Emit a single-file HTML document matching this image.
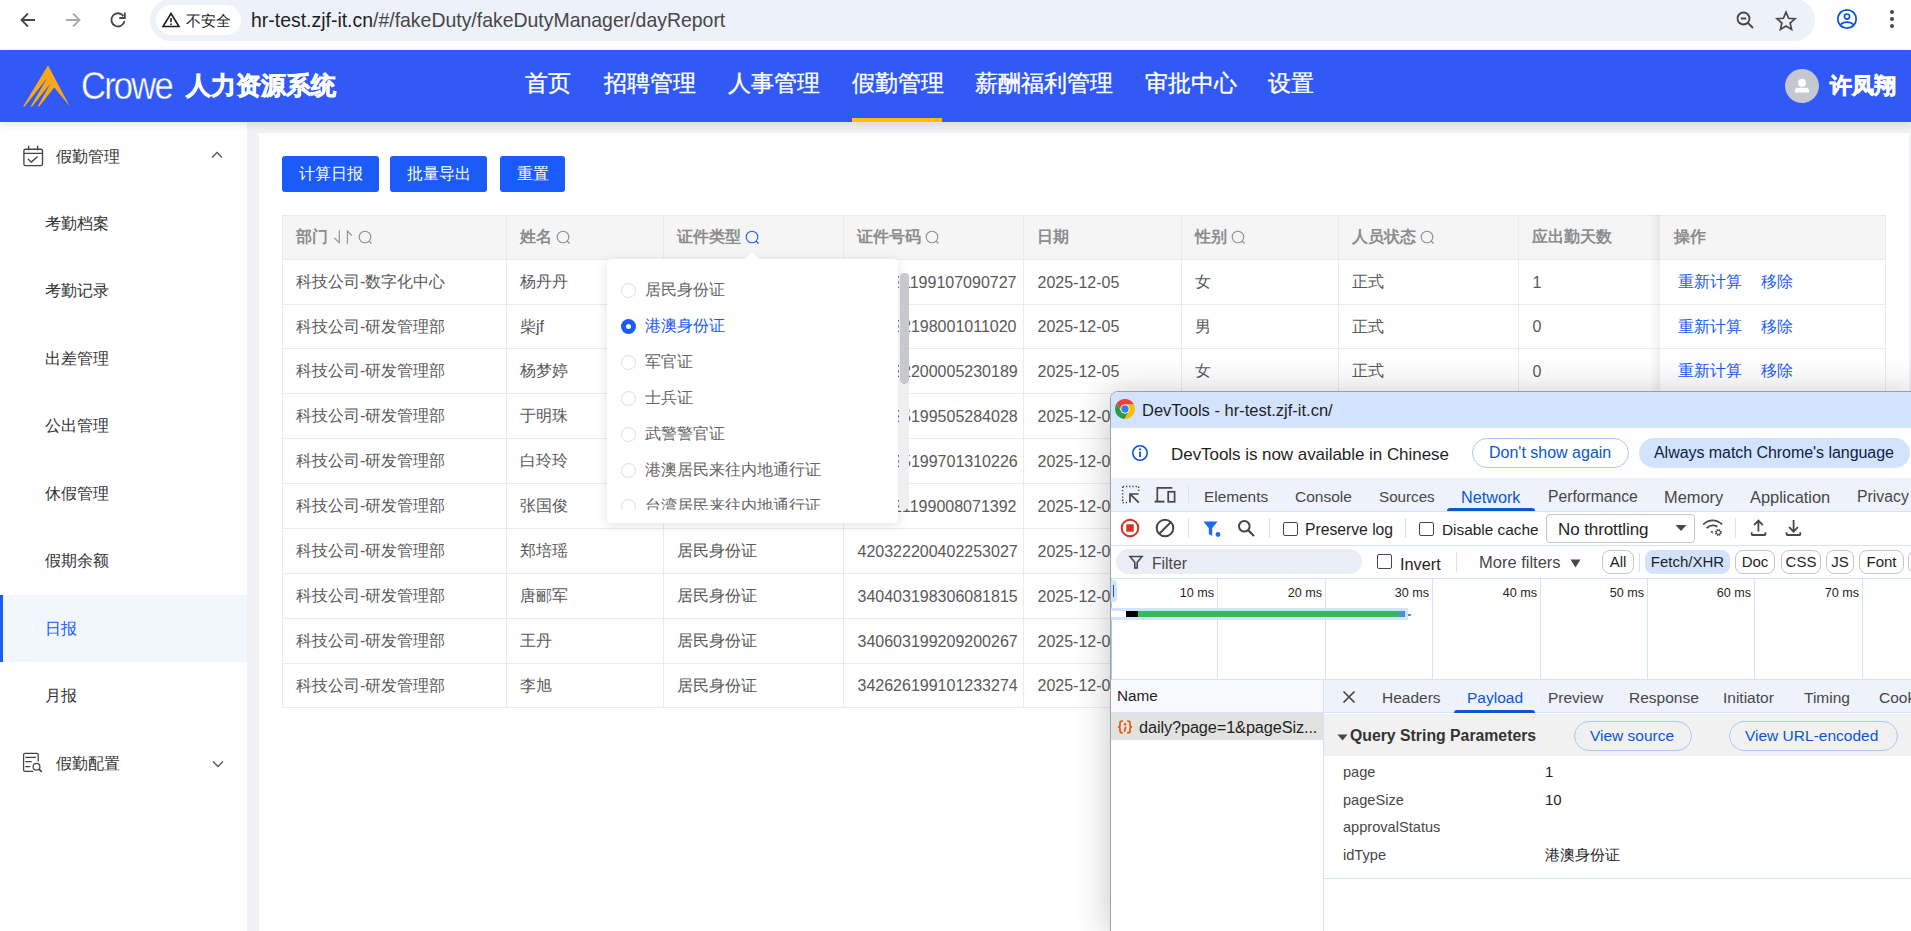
<!DOCTYPE html><html><head><meta charset="utf-8"><style>
*{box-sizing:border-box;margin:0;padding:0}
html,body{width:1911px;height:931px;overflow:hidden;background:#fff;font-family:"Liberation Sans",sans-serif;}
.a{position:absolute;white-space:nowrap}
svg{position:absolute;overflow:visible}
</style></head><body>
<div class="a" style="left:0px;top:0px;width:1911px;height:50px;background:#fff"></div>
<div class="a" style="left:150px;top:-1px;width:1665px;height:42px;background:#edf1f9;border-radius:21px"></div>
<div class="a" style="left:156px;top:5px;width:85px;height:30px;background:#fff;border-radius:15px"></div>
<svg style="left:18px;top:10px;" width="20" height="20" viewBox="0 0 20 20"><path d="M17 10H4M10 3.5L3.5 10 10 16.5" fill="none" stroke="#474747" stroke-width="1.8"/></svg>
<svg style="left:63px;top:10px;" width="20" height="20" viewBox="0 0 20 20"><path d="M3 10H16M10 3.5L16.5 10 10 16.5" fill="none" stroke="#a8a8a8" stroke-width="1.8"/></svg>
<svg style="left:108px;top:10px;" width="20" height="20" viewBox="0 0 20 20"><path d="M15.5 6.2A6.6 6.6 0 1 0 16.5 11" fill="none" stroke="#474747" stroke-width="1.8"/><path d="M16.8 2.5V8H11.3" fill="none" stroke="#474747" stroke-width="1.8"/></svg>
<svg style="left:162px;top:12px;" width="18" height="16" viewBox="0 0 18 16"><path d="M9 1.5L17 14.5H1Z" fill="none" stroke="#1f1f1f" stroke-width="1.6" stroke-linejoin="miter"/><path d="M9 6v4.2M9 11.5v1.6" stroke="#1f1f1f" stroke-width="1.6"/></svg>
<div class="a" style="left:186px;top:11px;font-size:15px;line-height:19px;color:#1f1f1f;">不安全</div>
<div class="a" style="left:251px;top:8.5px;font-size:19.45px;line-height:23.45px;color:#1f1f1f;">hr-test.zjf-it.cn<span style="color:#474747">/#/fakeDuty/fakeDutyManager/dayReport</span></div>
<svg style="left:1736px;top:11px;" width="20" height="20" viewBox="0 0 20 20"><circle cx="7.5" cy="7.5" r="6" fill="none" stroke="#474747" stroke-width="1.8"/><path d="M4.8 7.5H10.2M12 12L17 17" stroke="#474747" stroke-width="1.8"/></svg>
<svg style="left:1775px;top:10px;" width="22" height="22" viewBox="0 0 22 22"><path d="M11 2.2L13.6 8.3 20 8.8 15.1 13 16.6 19.4 11 16 5.4 19.4 6.9 13 2 8.8 8.4 8.3Z" fill="none" stroke="#474747" stroke-width="1.7" stroke-linejoin="miter"/></svg>
<svg style="left:1836px;top:8px;" width="22" height="22" viewBox="0 0 22 22"><circle cx="11" cy="11" r="9.2" fill="none" stroke="#0b57d0" stroke-width="1.8"/><circle cx="11" cy="8.6" r="2.6" fill="none" stroke="#0b57d0" stroke-width="1.7"/><path d="M5 16.6C7 13.4 15 13.4 17 16.6" fill="none" stroke="#0b57d0" stroke-width="1.7"/></svg>
<div class="a" style="left:1890px;top:10px;width:4px;height:4px;background:#474747;border-radius:2px"></div>
<div class="a" style="left:1890px;top:17px;width:4px;height:4px;background:#474747;border-radius:2px"></div>
<div class="a" style="left:1890px;top:24px;width:4px;height:4px;background:#474747;border-radius:2px"></div>
<div class="a" style="left:0px;top:122px;width:247px;height:809px;background:#fff"></div>
<div class="a" style="left:247px;top:122px;width:1664px;height:809px;background:#f0f1f4"></div>
<div class="a" style="left:259px;top:133px;width:1650px;height:798px;background:#fff"></div>
<div class="a" style="left:0px;top:50px;width:1911px;height:72px;background:#3059f5;box-shadow:0 3px 8px rgba(0,0,0,.10)"></div>
<svg style="left:18px;top:60px;" width="60" height="52" viewBox="0 0 60 52"><path d="M30 5.3L51.8 46.6 36.3 27.6 21.2 46.6 19.6 46.6 32.6 23.3 14.2 46.6 12.6 46.6 29.2 18 6.7 46.6 5.1 46.6Z" fill="#f5a81c"/></svg>
<div class="a" style="left:81px;top:64px;font-size:38px;line-height:44px;color:#fff;transform:scaleX(0.91);transform-origin:0 0;letter-spacing:-2px;-webkit-text-stroke:0.4px #3059f5">Crowe</div>
<div class="a" style="left:186px;top:71px;font-size:24.5px;line-height:30px;color:#fff;font-weight:bold;-webkit-text-stroke:0.7px #fff">人力资源系统</div>
<div class="a" style="left:525px;top:68px;font-size:23px;line-height:30px;color:#fff;-webkit-text-stroke:0.35px #fff">首页</div>
<div class="a" style="left:604px;top:68px;font-size:23px;line-height:30px;color:#fff;-webkit-text-stroke:0.35px #fff">招聘管理</div>
<div class="a" style="left:728px;top:68px;font-size:23px;line-height:30px;color:#fff;-webkit-text-stroke:0.35px #fff">人事管理</div>
<div class="a" style="left:852px;top:68px;font-size:23px;line-height:30px;color:#fff;-webkit-text-stroke:0.35px #fff">假勤管理</div>
<div class="a" style="left:975px;top:68px;font-size:23px;line-height:30px;color:#fff;-webkit-text-stroke:0.35px #fff">薪酬福利管理</div>
<div class="a" style="left:1145px;top:68px;font-size:23px;line-height:30px;color:#fff;-webkit-text-stroke:0.35px #fff">审批中心</div>
<div class="a" style="left:1268px;top:68px;font-size:23px;line-height:30px;color:#fff;-webkit-text-stroke:0.35px #fff">设置</div>
<div class="a" style="left:852px;top:118px;width:90px;height:4px;background:#ffbf00"></div>
<div class="a" style="left:1785px;top:69px;width:34px;height:34px;background:#c5c8d0;border-radius:50%"></div>
<svg style="left:1792px;top:75px;" width="20" height="20" viewBox="0 0 20 20"><circle cx="10" cy="7.8" r="4" fill="#fff"/><path d="M3 17.5V15.8C3 13.2 5 12.8 6.5 12.8H13.5C15 12.8 17 13.2 17 15.8V17.5Z" fill="#fff"/></svg>
<div class="a" style="left:1830px;top:70.7px;font-size:22.3px;line-height:30px;color:#fff;font-weight:bold;-webkit-text-stroke:0.7px #fff">许凤翔</div>
<svg style="left:15px;top:135px;" width="40" height="40" viewBox="0 0 40 40"><rect x="8.9" y="14.2" width="18.6" height="16.4" rx="1.6" fill="none" stroke="#444" stroke-width="1.35"/><path d="M13.6 10.8V15.2M22.6 10.8V15.2M8.9 18.4H27.5" stroke="#444" stroke-width="1.35"/><path d="M12.9 23.9L16.4 27 22.6 21.4" fill="none" stroke="#444" stroke-width="1.35"/></svg>
<div class="a" style="left:56px;top:146.5px;font-size:16px;line-height:20px;color:#333;">假勤管理</div>
<svg style="left:211px;top:151px;" width="12" height="8" viewBox="0 0 12 8"><path d="M1 6.5L6 1.5 11 6.5" fill="none" stroke="#555" stroke-width="1.3"/></svg>
<div class="a" style="left:45px;top:213.7px;font-size:16px;line-height:20px;color:#333;">考勤档案</div>
<div class="a" style="left:45px;top:281.2px;font-size:16px;line-height:20px;color:#333;">考勤记录</div>
<div class="a" style="left:45px;top:348.7px;font-size:16px;line-height:20px;color:#333;">出差管理</div>
<div class="a" style="left:45px;top:416.2px;font-size:16px;line-height:20px;color:#333;">公出管理</div>
<div class="a" style="left:45px;top:483.7px;font-size:16px;line-height:20px;color:#333;">休假管理</div>
<div class="a" style="left:45px;top:551.2px;font-size:16px;line-height:20px;color:#333;">假期余额</div>
<div class="a" style="left:0px;top:595px;width:247px;height:67px;background:#f2f7fe"></div>
<div class="a" style="left:0px;top:595px;width:3px;height:67px;background:#1a5bfa"></div>
<div class="a" style="left:45px;top:618.7px;font-size:16px;line-height:20px;color:#1a5bfa;">日报</div>
<div class="a" style="left:45px;top:686.2px;font-size:16px;line-height:20px;color:#333;">月报</div>
<svg style="left:15px;top:745px;" width="40" height="40" viewBox="0 0 40 40"><path d="M18.5 26.4H10Q8.6 26.4 8.6 25V9.8Q8.6 8.4 10 8.4H21.8Q23.2 8.4 23.2 9.8V16.5" fill="none" stroke="#444" stroke-width="1.25"/><path d="M10.3 12.4H21M10.3 16.7H16.7M10.3 21.5H15.3" stroke="#444" stroke-width="1.25"/><circle cx="21.5" cy="21.7" r="3.4" fill="none" stroke="#444" stroke-width="1.25"/><path d="M24 24.2L26.8 26.8" stroke="#444" stroke-width="1.7"/></svg>
<div class="a" style="left:56px;top:754.3px;font-size:16px;line-height:20px;color:#333;">假勤配置</div>
<svg style="left:212px;top:760px;" width="12" height="8" viewBox="0 0 12 8"><path d="M1 1.5L6 6.5 11 1.5" fill="none" stroke="#555" stroke-width="1.3"/></svg>
<div class="a" style="left:282px;top:156px;width:97px;height:36px;background:#1a5bfa;border-radius:3px;color:#fff;font-size:16px;line-height:36px;text-align:center">计算日报</div>
<div class="a" style="left:390px;top:156px;width:97px;height:36px;background:#1a5bfa;border-radius:3px;color:#fff;font-size:16px;line-height:36px;text-align:center">批量导出</div>
<div class="a" style="left:500px;top:156px;width:65px;height:36px;background:#1a5bfa;border-radius:3px;color:#fff;font-size:16px;line-height:36px;text-align:center">重置</div>
<div class="a" style="left:282px;top:215px;width:1603px;height:44px;background:#f5f5f5"></div>
<div class="a" style="left:282px;top:215px;width:1604px;height:1px;background:#e8ebf2"></div>
<div class="a" style="left:282px;top:259px;width:1604px;height:1px;background:#e8ebf2"></div>
<div class="a" style="left:282px;top:304px;width:1604px;height:1px;background:#e8ebf2"></div>
<div class="a" style="left:282px;top:348px;width:1604px;height:1px;background:#e8ebf2"></div>
<div class="a" style="left:282px;top:393px;width:1604px;height:1px;background:#e8ebf2"></div>
<div class="a" style="left:282px;top:438px;width:1604px;height:1px;background:#e8ebf2"></div>
<div class="a" style="left:282px;top:483px;width:1604px;height:1px;background:#e8ebf2"></div>
<div class="a" style="left:282px;top:528px;width:1604px;height:1px;background:#e8ebf2"></div>
<div class="a" style="left:282px;top:573px;width:1604px;height:1px;background:#e8ebf2"></div>
<div class="a" style="left:282px;top:618px;width:1604px;height:1px;background:#e8ebf2"></div>
<div class="a" style="left:282px;top:663px;width:1604px;height:1px;background:#e8ebf2"></div>
<div class="a" style="left:282px;top:707px;width:1604px;height:1px;background:#e8ebf2"></div>
<div class="a" style="left:282px;top:215px;width:1px;height:493px;background:#e8ebf2"></div>
<div class="a" style="left:506px;top:215px;width:1px;height:493px;background:#e8ebf2"></div>
<div class="a" style="left:663px;top:215px;width:1px;height:493px;background:#e8ebf2"></div>
<div class="a" style="left:843px;top:215px;width:1px;height:493px;background:#e8ebf2"></div>
<div class="a" style="left:1023px;top:215px;width:1px;height:493px;background:#e8ebf2"></div>
<div class="a" style="left:1181px;top:215px;width:1px;height:493px;background:#e8ebf2"></div>
<div class="a" style="left:1338px;top:215px;width:1px;height:493px;background:#e8ebf2"></div>
<div class="a" style="left:1518px;top:215px;width:1px;height:493px;background:#e8ebf2"></div>
<div class="a" style="left:1885px;top:215px;width:1px;height:493px;background:#e8ebf2"></div>
<div class="a" style="left:1650px;top:215px;width:10px;height:493px;background:linear-gradient(90deg,rgba(0,0,0,0),rgba(0,0,0,.06))"></div>
<div class="a" style="left:295.5px;top:227px;font-size:16px;line-height:20px;color:#8c8c8c;font-weight:bold">部门</div>
<div class="a" style="left:519.5px;top:227px;font-size:16px;line-height:20px;color:#8c8c8c;font-weight:bold">姓名</div>
<div class="a" style="left:676.5px;top:227px;font-size:16px;line-height:20px;color:#8c8c8c;font-weight:bold">证件类型</div>
<div class="a" style="left:856.5px;top:227px;font-size:16px;line-height:20px;color:#8c8c8c;font-weight:bold">证件号码</div>
<div class="a" style="left:1036.5px;top:227px;font-size:16px;line-height:20px;color:#8c8c8c;font-weight:bold">日期</div>
<div class="a" style="left:1194.5px;top:227px;font-size:16px;line-height:20px;color:#8c8c8c;font-weight:bold">性别</div>
<div class="a" style="left:1351.5px;top:227px;font-size:16px;line-height:20px;color:#8c8c8c;font-weight:bold">人员状态</div>
<div class="a" style="left:1531.5px;top:227px;font-size:16px;line-height:20px;color:#8c8c8c;font-weight:bold">应出勤天数</div>
<div class="a" style="left:1673.5px;top:227px;font-size:16px;line-height:20px;color:#8c8c8c;font-weight:bold">操作</div>
<svg style="left:333px;top:229px;" width="22" height="16" viewBox="0 0 22 16"><path d="M6.3 1.2V13.7L1.3 8.9" fill="none" stroke="#8a8d92" stroke-width="1.1"/><path d="M14.4 14.7V2L18.8 6.5" fill="none" stroke="#8a8d92" stroke-width="1.1"/></svg>
<svg style="left:357.5px;top:229.5px;" width="16" height="16" viewBox="0 0 16 16"><circle cx="7" cy="7" r="5.8" fill="none" stroke="#8a8d92" stroke-width="1.1"/><path d="M11.2 11.2L13.5 13.5" stroke="#8a8d92" stroke-width="1.2"/></svg>
<svg style="left:555.5px;top:229.5px;" width="16" height="16" viewBox="0 0 16 16"><circle cx="7" cy="7" r="5.8" fill="none" stroke="#8a8d92" stroke-width="1.1"/><path d="M11.2 11.2L13.5 13.5" stroke="#8a8d92" stroke-width="1.2"/></svg>
<svg style="left:744.5px;top:229.5px;" width="16" height="16" viewBox="0 0 16 16"><circle cx="7" cy="7" r="5.8" fill="none" stroke="#1a5bfa" stroke-width="1.1"/><path d="M11.2 11.2L13.5 13.5" stroke="#1a5bfa" stroke-width="1.2"/></svg>
<svg style="left:924.5px;top:229.5px;" width="16" height="16" viewBox="0 0 16 16"><circle cx="7" cy="7" r="5.8" fill="none" stroke="#8a8d92" stroke-width="1.1"/><path d="M11.2 11.2L13.5 13.5" stroke="#8a8d92" stroke-width="1.2"/></svg>
<svg style="left:1230.5px;top:229.5px;" width="16" height="16" viewBox="0 0 16 16"><circle cx="7" cy="7" r="5.8" fill="none" stroke="#8a8d92" stroke-width="1.1"/><path d="M11.2 11.2L13.5 13.5" stroke="#8a8d92" stroke-width="1.2"/></svg>
<svg style="left:1419.5px;top:229.5px;" width="16" height="16" viewBox="0 0 16 16"><circle cx="7" cy="7" r="5.8" fill="none" stroke="#8a8d92" stroke-width="1.1"/><path d="M11.2 11.2L13.5 13.5" stroke="#8a8d92" stroke-width="1.2"/></svg>
<div class="a" style="left:296px;top:272.09999999999997px;font-size:16px;line-height:20px;color:#595959;">科技公司-数字化中心</div>
<div class="a" style="left:520px;top:272.09999999999997px;font-size:16px;line-height:20px;color:#595959;">杨丹丹</div>
<div class="a" style="left:677px;top:272.09999999999997px;font-size:16px;line-height:20px;color:#595959;">居民身份证</div>
<div class="a" style="left:857.5px;top:272.7px;font-size:16px;line-height:20px;color:#595959;">340521199107090727</div>
<div class="a" style="left:1037.5px;top:272.7px;font-size:16px;line-height:20px;color:#595959;">2025-12-05</div>
<div class="a" style="left:1195px;top:272.09999999999997px;font-size:16px;line-height:20px;color:#595959;">女</div>
<div class="a" style="left:1352px;top:272.09999999999997px;font-size:16px;line-height:20px;color:#595959;">正式</div>
<div class="a" style="left:1532.5px;top:272.7px;font-size:16px;line-height:20px;color:#595959;">1</div>
<div class="a" style="left:1678px;top:272.09999999999997px;font-size:16px;line-height:20px;color:#1a5bfa;">重新计算</div>
<div class="a" style="left:1760.5px;top:272.09999999999997px;font-size:16px;line-height:20px;color:#1a5bfa;">移除</div>
<div class="a" style="left:296px;top:316.59999999999997px;font-size:16px;line-height:20px;color:#595959;">科技公司-研发管理部</div>
<div class="a" style="left:520px;top:316.59999999999997px;font-size:16px;line-height:20px;color:#595959;">柴jf</div>
<div class="a" style="left:677px;top:316.59999999999997px;font-size:16px;line-height:20px;color:#595959;">居民身份证</div>
<div class="a" style="left:857.5px;top:317.2px;font-size:16px;line-height:20px;color:#595959;">340422198001011020</div>
<div class="a" style="left:1037.5px;top:317.2px;font-size:16px;line-height:20px;color:#595959;">2025-12-05</div>
<div class="a" style="left:1195px;top:316.59999999999997px;font-size:16px;line-height:20px;color:#595959;">男</div>
<div class="a" style="left:1352px;top:316.59999999999997px;font-size:16px;line-height:20px;color:#595959;">正式</div>
<div class="a" style="left:1532.5px;top:317.2px;font-size:16px;line-height:20px;color:#595959;">0</div>
<div class="a" style="left:1678px;top:316.59999999999997px;font-size:16px;line-height:20px;color:#1a5bfa;">重新计算</div>
<div class="a" style="left:1760.5px;top:316.59999999999997px;font-size:16px;line-height:20px;color:#1a5bfa;">移除</div>
<div class="a" style="left:296px;top:361.09999999999997px;font-size:16px;line-height:20px;color:#595959;">科技公司-研发管理部</div>
<div class="a" style="left:520px;top:361.09999999999997px;font-size:16px;line-height:20px;color:#595959;">杨梦婷</div>
<div class="a" style="left:677px;top:361.09999999999997px;font-size:16px;line-height:20px;color:#595959;">居民身份证</div>
<div class="a" style="left:857.5px;top:361.7px;font-size:16px;line-height:20px;color:#595959;">340122200005230189</div>
<div class="a" style="left:1037.5px;top:361.7px;font-size:16px;line-height:20px;color:#595959;">2025-12-05</div>
<div class="a" style="left:1195px;top:361.09999999999997px;font-size:16px;line-height:20px;color:#595959;">女</div>
<div class="a" style="left:1352px;top:361.09999999999997px;font-size:16px;line-height:20px;color:#595959;">正式</div>
<div class="a" style="left:1532.5px;top:361.7px;font-size:16px;line-height:20px;color:#595959;">0</div>
<div class="a" style="left:1678px;top:361.09999999999997px;font-size:16px;line-height:20px;color:#1a5bfa;">重新计算</div>
<div class="a" style="left:1760.5px;top:361.09999999999997px;font-size:16px;line-height:20px;color:#1a5bfa;">移除</div>
<div class="a" style="left:296px;top:406.09999999999997px;font-size:16px;line-height:20px;color:#595959;">科技公司-研发管理部</div>
<div class="a" style="left:520px;top:406.09999999999997px;font-size:16px;line-height:20px;color:#595959;">于明珠</div>
<div class="a" style="left:677px;top:406.09999999999997px;font-size:16px;line-height:20px;color:#595959;">居民身份证</div>
<div class="a" style="left:857.5px;top:406.7px;font-size:16px;line-height:20px;color:#595959;">340825199505284028</div>
<div class="a" style="left:1037.5px;top:406.7px;font-size:16px;line-height:20px;color:#595959;">2025-12-05</div>
<div class="a" style="left:1195px;top:406.09999999999997px;font-size:16px;line-height:20px;color:#595959;">女</div>
<div class="a" style="left:1352px;top:406.09999999999997px;font-size:16px;line-height:20px;color:#595959;">正式</div>
<div class="a" style="left:1532.5px;top:406.7px;font-size:16px;line-height:20px;color:#595959;">0</div>
<div class="a" style="left:1678px;top:406.09999999999997px;font-size:16px;line-height:20px;color:#1a5bfa;">重新计算</div>
<div class="a" style="left:1760.5px;top:406.09999999999997px;font-size:16px;line-height:20px;color:#1a5bfa;">移除</div>
<div class="a" style="left:296px;top:451.09999999999997px;font-size:16px;line-height:20px;color:#595959;">科技公司-研发管理部</div>
<div class="a" style="left:520px;top:451.09999999999997px;font-size:16px;line-height:20px;color:#595959;">白玲玲</div>
<div class="a" style="left:677px;top:451.09999999999997px;font-size:16px;line-height:20px;color:#595959;">居民身份证</div>
<div class="a" style="left:857.5px;top:451.7px;font-size:16px;line-height:20px;color:#595959;">340825199701310226</div>
<div class="a" style="left:1037.5px;top:451.7px;font-size:16px;line-height:20px;color:#595959;">2025-12-05</div>
<div class="a" style="left:1195px;top:451.09999999999997px;font-size:16px;line-height:20px;color:#595959;">女</div>
<div class="a" style="left:1352px;top:451.09999999999997px;font-size:16px;line-height:20px;color:#595959;">正式</div>
<div class="a" style="left:1532.5px;top:451.7px;font-size:16px;line-height:20px;color:#595959;">0</div>
<div class="a" style="left:1678px;top:451.09999999999997px;font-size:16px;line-height:20px;color:#1a5bfa;">重新计算</div>
<div class="a" style="left:1760.5px;top:451.09999999999997px;font-size:16px;line-height:20px;color:#1a5bfa;">移除</div>
<div class="a" style="left:296px;top:496.09999999999997px;font-size:16px;line-height:20px;color:#595959;">科技公司-研发管理部</div>
<div class="a" style="left:520px;top:496.09999999999997px;font-size:16px;line-height:20px;color:#595959;">张国俊</div>
<div class="a" style="left:677px;top:496.09999999999997px;font-size:16px;line-height:20px;color:#595959;">居民身份证</div>
<div class="a" style="left:857.5px;top:496.7px;font-size:16px;line-height:20px;color:#595959;">340121199008071392</div>
<div class="a" style="left:1037.5px;top:496.7px;font-size:16px;line-height:20px;color:#595959;">2025-12-05</div>
<div class="a" style="left:1195px;top:496.09999999999997px;font-size:16px;line-height:20px;color:#595959;">男</div>
<div class="a" style="left:1352px;top:496.09999999999997px;font-size:16px;line-height:20px;color:#595959;">正式</div>
<div class="a" style="left:1532.5px;top:496.7px;font-size:16px;line-height:20px;color:#595959;">0</div>
<div class="a" style="left:1678px;top:496.09999999999997px;font-size:16px;line-height:20px;color:#1a5bfa;">重新计算</div>
<div class="a" style="left:1760.5px;top:496.09999999999997px;font-size:16px;line-height:20px;color:#1a5bfa;">移除</div>
<div class="a" style="left:296px;top:541.1px;font-size:16px;line-height:20px;color:#595959;">科技公司-研发管理部</div>
<div class="a" style="left:520px;top:541.1px;font-size:16px;line-height:20px;color:#595959;">郑培瑶</div>
<div class="a" style="left:677px;top:541.1px;font-size:16px;line-height:20px;color:#595959;">居民身份证</div>
<div class="a" style="left:857.5px;top:541.7px;font-size:16px;line-height:20px;color:#595959;">420322200402253027</div>
<div class="a" style="left:1037.5px;top:541.7px;font-size:16px;line-height:20px;color:#595959;">2025-12-05</div>
<div class="a" style="left:1195px;top:541.1px;font-size:16px;line-height:20px;color:#595959;">女</div>
<div class="a" style="left:1352px;top:541.1px;font-size:16px;line-height:20px;color:#595959;">正式</div>
<div class="a" style="left:1532.5px;top:541.7px;font-size:16px;line-height:20px;color:#595959;">0</div>
<div class="a" style="left:1678px;top:541.1px;font-size:16px;line-height:20px;color:#1a5bfa;">重新计算</div>
<div class="a" style="left:1760.5px;top:541.1px;font-size:16px;line-height:20px;color:#1a5bfa;">移除</div>
<div class="a" style="left:296px;top:586.1px;font-size:16px;line-height:20px;color:#595959;">科技公司-研发管理部</div>
<div class="a" style="left:520px;top:586.1px;font-size:16px;line-height:20px;color:#595959;">唐郦军</div>
<div class="a" style="left:677px;top:586.1px;font-size:16px;line-height:20px;color:#595959;">居民身份证</div>
<div class="a" style="left:857.5px;top:586.7px;font-size:16px;line-height:20px;color:#595959;">340403198306081815</div>
<div class="a" style="left:1037.5px;top:586.7px;font-size:16px;line-height:20px;color:#595959;">2025-12-05</div>
<div class="a" style="left:1195px;top:586.1px;font-size:16px;line-height:20px;color:#595959;">男</div>
<div class="a" style="left:1352px;top:586.1px;font-size:16px;line-height:20px;color:#595959;">正式</div>
<div class="a" style="left:1532.5px;top:586.7px;font-size:16px;line-height:20px;color:#595959;">0</div>
<div class="a" style="left:1678px;top:586.1px;font-size:16px;line-height:20px;color:#1a5bfa;">重新计算</div>
<div class="a" style="left:1760.5px;top:586.1px;font-size:16px;line-height:20px;color:#1a5bfa;">移除</div>
<div class="a" style="left:296px;top:631.1px;font-size:16px;line-height:20px;color:#595959;">科技公司-研发管理部</div>
<div class="a" style="left:520px;top:631.1px;font-size:16px;line-height:20px;color:#595959;">王丹</div>
<div class="a" style="left:677px;top:631.1px;font-size:16px;line-height:20px;color:#595959;">居民身份证</div>
<div class="a" style="left:857.5px;top:631.7px;font-size:16px;line-height:20px;color:#595959;">340603199209200267</div>
<div class="a" style="left:1037.5px;top:631.7px;font-size:16px;line-height:20px;color:#595959;">2025-12-05</div>
<div class="a" style="left:1195px;top:631.1px;font-size:16px;line-height:20px;color:#595959;">女</div>
<div class="a" style="left:1352px;top:631.1px;font-size:16px;line-height:20px;color:#595959;">正式</div>
<div class="a" style="left:1532.5px;top:631.7px;font-size:16px;line-height:20px;color:#595959;">0</div>
<div class="a" style="left:1678px;top:631.1px;font-size:16px;line-height:20px;color:#1a5bfa;">重新计算</div>
<div class="a" style="left:1760.5px;top:631.1px;font-size:16px;line-height:20px;color:#1a5bfa;">移除</div>
<div class="a" style="left:296px;top:675.6px;font-size:16px;line-height:20px;color:#595959;">科技公司-研发管理部</div>
<div class="a" style="left:520px;top:675.6px;font-size:16px;line-height:20px;color:#595959;">李旭</div>
<div class="a" style="left:677px;top:675.6px;font-size:16px;line-height:20px;color:#595959;">居民身份证</div>
<div class="a" style="left:857.5px;top:676.2px;font-size:16px;line-height:20px;color:#595959;">342626199101233274</div>
<div class="a" style="left:1037.5px;top:676.2px;font-size:16px;line-height:20px;color:#595959;">2025-12-05</div>
<div class="a" style="left:1195px;top:675.6px;font-size:16px;line-height:20px;color:#595959;">男</div>
<div class="a" style="left:1352px;top:675.6px;font-size:16px;line-height:20px;color:#595959;">正式</div>
<div class="a" style="left:1532.5px;top:676.2px;font-size:16px;line-height:20px;color:#595959;">0</div>
<div class="a" style="left:1678px;top:675.6px;font-size:16px;line-height:20px;color:#1a5bfa;">重新计算</div>
<div class="a" style="left:1760.5px;top:675.6px;font-size:16px;line-height:20px;color:#1a5bfa;">移除</div>
<div class="a" style="left:607px;top:259px;width:291.3px;height:263.5px;background:#fff;border-radius:4px;box-shadow:0 2px 12px rgba(0,0,0,.12)"></div>
<svg style="left:744px;top:252px;" width="16" height="8" viewBox="0 0 16 8"><path d="M0 8L8 0 16 8Z" fill="#fff"/></svg>
<div class="a" style="left:607px;top:259px;width:290px;height:251px;overflow:hidden">
<div class="a" style="left:14px;top:23.5px;width:15px;height:15px;border-radius:50%;border:1px solid #dcdfe6"></div>
<div class="a" style="left:38px;top:21px;font-size:16px;line-height:20px;color:#666">居民身份证</div>
<div class="a" style="left:14px;top:59.5px;width:15px;height:15px;border-radius:50%;background:#1a5bfa"></div>
<div class="a" style="left:19px;top:64.5px;width:5px;height:5px;border-radius:50%;background:#fff"></div>
<div class="a" style="left:38px;top:57px;font-size:16px;line-height:20px;color:#1a5bfa">港澳身份证</div>
<div class="a" style="left:14px;top:95.5px;width:15px;height:15px;border-radius:50%;border:1px solid #dcdfe6"></div>
<div class="a" style="left:38px;top:93px;font-size:16px;line-height:20px;color:#666">军官证</div>
<div class="a" style="left:14px;top:131.5px;width:15px;height:15px;border-radius:50%;border:1px solid #dcdfe6"></div>
<div class="a" style="left:38px;top:129px;font-size:16px;line-height:20px;color:#666">士兵证</div>
<div class="a" style="left:14px;top:167.5px;width:15px;height:15px;border-radius:50%;border:1px solid #dcdfe6"></div>
<div class="a" style="left:38px;top:165px;font-size:16px;line-height:20px;color:#666">武警警官证</div>
<div class="a" style="left:14px;top:203.5px;width:15px;height:15px;border-radius:50%;border:1px solid #dcdfe6"></div>
<div class="a" style="left:38px;top:201px;font-size:16px;line-height:20px;color:#666">港澳居民来往内地通行证</div>
<div class="a" style="left:14px;top:239.5px;width:15px;height:15px;border-radius:50%;border:1px solid #dcdfe6"></div>
<div class="a" style="left:38px;top:237px;font-size:16px;line-height:20px;color:#666">台湾居民来往内地通行证</div>
</div>
<div class="a" style="left:898.5px;top:273px;width:10.5px;height:237px;background:#efeff1;border-radius:0 0 5px 5px"></div>
<div class="a" style="left:900px;top:273px;width:9px;height:111px;background:#c8c9cc;border-radius:4.5px"></div>
<div class="a" style="left:1110px;top:391px;width:810px;height:545px;background:#fff;border:1px solid #a0a0a0;border-radius:8px 0 0 0;box-shadow:-3px 0 34px rgba(0,0,0,.2)"></div>
<div class="a" style="left:1111px;top:392px;width:800px;height:36px;background:#d3e3fd;border-radius:7px 0 0 0"></div>
<svg style="left:1115px;top:399px;" width="20" height="20" viewBox="0 0 20 20"><path d="M10 5.5H18.93A10 10 0 0 0 1.63 4.52L6.1 12.25A4.5 4.5 0 0 1 10 5.5Z" fill="#ea4335"/><path d="M13.9 12.25L9.43 19.98A10 10 0 0 0 18.93 5.5H10A4.5 4.5 0 0 1 13.9 12.25Z" fill="#fbbc04"/><path d="M6.1 12.25L1.63 4.52A10 10 0 0 0 9.43 19.98L13.9 12.25A4.5 4.5 0 0 1 6.1 12.25Z" fill="#2a9d4c"/><circle cx="10" cy="10" r="4.6" fill="#fff"/><circle cx="10" cy="10" r="3.7" fill="#3b7ded"/></svg>
<div class="a" style="left:1142px;top:400.2px;font-size:16.5px;line-height:20px;color:#1f1f1f;">DevTools - hr-test.zjf-it.cn/</div>
<div class="a" style="left:1111px;top:428px;width:800px;height:50px;background:#fff"></div>
<svg style="left:1131px;top:444px;" width="18" height="18" viewBox="0 0 18 18"><circle cx="9" cy="9" r="7.2" fill="none" stroke="#0b57d0" stroke-width="1.6"/><path d="M9 7.6V13" stroke="#0b57d0" stroke-width="1.8"/><circle cx="9" cy="5.3" r="1.1" fill="#0b57d0"/></svg>
<div class="a" style="left:1171px;top:445px;font-size:17px;line-height:20px;color:#1f1f1f;letter-spacing:-0.05px">DevTools is now available in Chinese</div>
<div class="a" style="left:1472px;top:438px;width:157px;height:30px;border:1px solid #a8c7fa;border-radius:15px;background:#fff"></div>
<div class="a" style="left:1489px;top:442.8px;font-size:16px;line-height:20px;color:#0b57d0;">Don't show again</div>
<div class="a" style="left:1639px;top:438px;width:271px;height:30px;background:#d3e3fd;border-radius:15px"></div>
<div class="a" style="left:1654px;top:442.8px;font-size:16px;line-height:20px;color:#0a1f44;letter-spacing:-0.05px">Always match Chrome's language</div>
<div class="a" style="left:1111px;top:478px;width:800px;height:34px;background:#eef2fa;border-bottom:1px solid #d3e3fd"></div>
<svg style="left:1120px;top:484px;" width="22" height="22" viewBox="0 0 22 22"><path d="M2.8 2.6H18.4M2.6 2.8V18.4M18.6 2.6V8M2.6 18.6H8" fill="none" stroke="#474747" stroke-width="1.5" stroke-dasharray="1.3 1.9"/><path d="M10 18.6V10H18.6M10.2 10.2L18.8 18.6" fill="none" stroke="#474747" stroke-width="1.7"/></svg>
<svg style="left:1154px;top:485px;" width="24" height="20" viewBox="0 0 24 20"><path d="M3.3 16.3V2.8H18.3" fill="none" stroke="#474747" stroke-width="1.7"/><path d="M0.6 16.6H10.5" stroke="#474747" stroke-width="1.9"/><rect x="14.2" y="6.8" width="6.4" height="10" fill="none" stroke="#474747" stroke-width="1.7"/></svg>
<div class="a" style="left:1188px;top:485px;width:1px;height:18px;background:#d3e3fd"></div>
<div class="a" style="left:1204px;top:486.5px;font-size:15.4px;line-height:20px;color:#474747;">Elements</div>
<div class="a" style="left:1295px;top:486.5px;font-size:15.5px;line-height:20px;color:#474747;">Console</div>
<div class="a" style="left:1379px;top:486.5px;font-size:15.2px;line-height:20px;color:#474747;">Sources</div>
<div class="a" style="left:1461px;top:486.5px;font-size:16.2px;line-height:20px;color:#0b57d0;">Network</div>
<div class="a" style="left:1548px;top:486.5px;font-size:15.7px;line-height:20px;color:#474747;">Performance</div>
<div class="a" style="left:1664px;top:486.5px;font-size:16.4px;line-height:20px;color:#474747;">Memory</div>
<div class="a" style="left:1750px;top:486.5px;font-size:16.4px;line-height:20px;color:#474747;">Application</div>
<div class="a" style="left:1857px;top:486.5px;font-size:15.8px;line-height:20px;color:#474747;">Privacy</div>
<div class="a" style="left:1447px;top:508px;width:88px;height:3px;background:#0b57d0;border-radius:3px 3px 0 0"></div>
<div class="a" style="left:1111px;top:512px;width:800px;height:34px;background:#fff;border-bottom:1px solid #d3e3fd"></div>
<svg style="left:1120px;top:518px;" width="20" height="20" viewBox="0 0 20 20"><circle cx="10" cy="10" r="8.3" fill="none" stroke="#d93025" stroke-width="2"/><rect x="6.3" y="6.3" width="7.4" height="7.4" fill="#d93025"/></svg>
<svg style="left:1155px;top:518px;" width="20" height="20" viewBox="0 0 20 20"><circle cx="10" cy="10" r="8.3" fill="none" stroke="#474747" stroke-width="2"/><path d="M4.3 15.7L15.7 4.3" stroke="#474747" stroke-width="2"/></svg>
<div class="a" style="left:1188px;top:518px;width:1px;height:20px;background:#d3e3fd"></div>
<svg style="left:1202px;top:520px;" width="20" height="18" viewBox="0 0 20 18"><path d="M1.5 1.5H15.5L10.2 8.2V16L6.8 14V8.2Z" fill="#1b6ef3"/><circle cx="16" cy="14.5" r="2.4" fill="#1b6ef3"/></svg>
<svg style="left:1237px;top:519px;" width="20" height="20" viewBox="0 0 20 20"><circle cx="7.3" cy="7.3" r="5.3" fill="none" stroke="#474747" stroke-width="2"/><path d="M11 11L17 17" stroke="#474747" stroke-width="2.2"/></svg>
<div class="a" style="left:1269px;top:518px;width:1px;height:20px;background:#d3e3fd"></div>
<div class="a" style="left:1283px;top:522px;width:15px;height:14px;border:1.5px solid #474747;border-radius:2px"></div>
<div class="a" style="left:1305px;top:519.5px;font-size:15.7px;line-height:20px;color:#1f1f1f;">Preserve log</div>
<div class="a" style="left:1405px;top:518px;width:1px;height:20px;background:#d3e3fd"></div>
<div class="a" style="left:1419px;top:522px;width:15px;height:14px;border:1.5px solid #474747;border-radius:2px"></div>
<div class="a" style="left:1442px;top:519.5px;font-size:15.4px;line-height:20px;color:#1f1f1f;">Disable cache</div>
<div class="a" style="left:1546px;top:514px;width:149px;height:29px;border:1px solid #c4c7c5;border-radius:4px"></div>
<div class="a" style="left:1558px;top:519.5px;font-size:17px;line-height:20px;color:#1f1f1f;letter-spacing:-0.1px">No throttling</div>
<svg style="left:1675px;top:524px;" width="12" height="8" viewBox="0 0 12 8"><path d="M0.5 1H11.5L6 7Z" fill="#474747"/></svg>
<div class="a" style="left:1735px;top:518px;width:1px;height:20px;background:#d3e3fd"></div>
<svg style="left:1698px;top:514px;" width="110" height="28" viewBox="0 0 110 28"><path d="M5.2 10.4Q14.7 2.4 24.2 10.4M8.6 14.1Q13.8 9.6 19.3 12.6" fill="none" stroke="#474747" stroke-width="1.8"/><path d="M12.3 17.8L14.7 16.6V19.8Z" fill="#474747"/><circle cx="20.4" cy="18.4" r="2.6" fill="none" stroke="#474747" stroke-width="1.8" stroke-dasharray="1.3 0.75"/><circle cx="20.4" cy="18.4" r="2.1" fill="none" stroke="#474747" stroke-width="1"/><path d="M60.4 17.6V6.6M56.1 11.2L60.4 6.6 64.8 11.2M53.7 18.2V20.2Q53.7 21 54.5 21H66.6Q67.4 21 67.4 20.2V18.2" fill="none" stroke="#474747" stroke-width="1.8"/><path d="M95.6 6V17M91.2 13.2L95.6 17.6 99.9 13.2M88.6 18.2V20.2Q88.6 21 89.4 21H101.5Q102.3 21 102.3 20.2V18.2" fill="none" stroke="#474747" stroke-width="1.8"/></svg>
<div class="a" style="left:1111px;top:546px;width:800px;height:33px;background:#fff;border-bottom:1px solid #d3e3fd"></div>
<div class="a" style="left:1116px;top:549px;width:246px;height:25px;background:#e9eef6;border-radius:12.5px"></div>
<svg style="left:1129px;top:555px;" width="14" height="14" viewBox="0 0 14 14"><path d="M1 1.5H13L8.2 7.3V13H5.8V7.3Z" fill="none" stroke="#474747" stroke-width="1.6"/></svg>
<div class="a" style="left:1152px;top:553.5px;font-size:15.7px;line-height:20px;color:#474747;">Filter</div>
<div class="a" style="left:1377px;top:554px;width:15px;height:15px;border:1.5px solid #474747;border-radius:2px"></div>
<div class="a" style="left:1400px;top:553.5px;font-size:16.3px;line-height:20px;color:#1f1f1f;">Invert</div>
<div class="a" style="left:1456px;top:552px;width:1px;height:20px;background:#d3e3fd"></div>
<div class="a" style="left:1479px;top:551.8px;font-size:16.5px;line-height:20px;color:#474747;">More filters</div>
<svg style="left:1570px;top:559px;" width="11" height="9" viewBox="0 0 11 9"><path d="M0.5 0.5H10.5L5.5 8.5Z" fill="#474747"/></svg>
<div class="a" style="left:1602px;top:550px;width:32px;height:24px;border:1px solid #c4c7c5;border-radius:8px;font-size:15px;line-height:22px;color:#1f1f1f;text-align:center">All</div>
<div class="a" style="left:1645px;top:550px;width:85px;height:24px;background:#d3e3fd;border:1px solid #d3e3fd;border-radius:8px;font-size:15px;line-height:22px;color:#1f1f1f;text-align:center">Fetch/XHR</div>
<div class="a" style="left:1735px;top:550px;width:40px;height:24px;border:1px solid #c4c7c5;border-radius:8px;font-size:15px;line-height:22px;color:#1f1f1f;text-align:center">Doc</div>
<div class="a" style="left:1781px;top:550px;width:40px;height:24px;border:1px solid #c4c7c5;border-radius:8px;font-size:15px;line-height:22px;color:#1f1f1f;text-align:center">CSS</div>
<div class="a" style="left:1826px;top:550px;width:28px;height:24px;border:1px solid #c4c7c5;border-radius:8px;font-size:15px;line-height:22px;color:#1f1f1f;text-align:center">JS</div>
<div class="a" style="left:1859px;top:550px;width:45px;height:24px;border:1px solid #c4c7c5;border-radius:8px;font-size:15px;line-height:22px;color:#1f1f1f;text-align:center">Font</div>
<div class="a" style="left:1908px;top:550px;width:20px;height:24px;border:1px solid #c4c7c5;border-radius:8px;font-size:15px;line-height:22px;color:#1f1f1f;text-align:center"></div>
<div class="a" style="left:1639px;top:553px;width:1px;height:19px;background:#d3e3fd"></div>
<div class="a" style="left:1111px;top:579px;width:800px;height:101px;background:#fff;border-bottom:1px solid #d3e3fd"></div>
<div class="a" style="left:1111px;top:579px;width:1px;height:101px;background:#a8c7fa"></div>
<div class="a" style="left:1217px;top:579px;width:1px;height:101px;background:#d3e3fd"></div>
<div class="a" style="left:1157px;top:584.5px;width:57px;text-align:right;font-size:12.6px;line-height:16px;color:#1f1f1f">10 ms</div>
<div class="a" style="left:1325px;top:579px;width:1px;height:101px;background:#d3e3fd"></div>
<div class="a" style="left:1265px;top:584.5px;width:57px;text-align:right;font-size:12.6px;line-height:16px;color:#1f1f1f">20 ms</div>
<div class="a" style="left:1432px;top:579px;width:1px;height:101px;background:#d3e3fd"></div>
<div class="a" style="left:1372px;top:584.5px;width:57px;text-align:right;font-size:12.6px;line-height:16px;color:#1f1f1f">30 ms</div>
<div class="a" style="left:1540px;top:579px;width:1px;height:101px;background:#d3e3fd"></div>
<div class="a" style="left:1480px;top:584.5px;width:57px;text-align:right;font-size:12.6px;line-height:16px;color:#1f1f1f">40 ms</div>
<div class="a" style="left:1647px;top:579px;width:1px;height:101px;background:#d3e3fd"></div>
<div class="a" style="left:1587px;top:584.5px;width:57px;text-align:right;font-size:12.6px;line-height:16px;color:#1f1f1f">50 ms</div>
<div class="a" style="left:1754px;top:579px;width:1px;height:101px;background:#d3e3fd"></div>
<div class="a" style="left:1694px;top:584.5px;width:57px;text-align:right;font-size:12.6px;line-height:16px;color:#1f1f1f">60 ms</div>
<div class="a" style="left:1862px;top:579px;width:1px;height:101px;background:#d3e3fd"></div>
<div class="a" style="left:1802px;top:584.5px;width:57px;text-align:right;font-size:12.6px;line-height:16px;color:#1f1f1f">70 ms</div>
<div class="a" style="left:1111px;top:580px;width:6px;height:22px;background:#d3e3fd;border-radius:0 4px 4px 0"></div>
<div class="a" style="left:1113px;top:585px;width:1px;height:12px;background:#0b57d0"></div>
<div class="a" style="left:1111px;top:608px;width:297px;height:12px;background:#d3e3fd"></div>
<div class="a" style="left:1111px;top:611px;width:15px;height:6px;background:#fff"></div>
<div class="a" style="left:1126px;top:611px;width:12px;height:6px;background:#000"></div>
<div class="a" style="left:1138px;top:611px;width:261px;height:6px;background:#36b85c"></div>
<div class="a" style="left:1399px;top:611px;width:6px;height:6px;background:#4a90e2"></div>
<div class="a" style="left:1408px;top:614px;width:3px;height:2px;background:#4a90e2"></div>
<div class="a" style="left:1111px;top:680px;width:212px;height:33px;background:#f8f9fd;border-bottom:1px solid #d3e3fd"></div>
<div class="a" style="left:1117px;top:686px;font-size:15.3px;line-height:20px;color:#1f1f1f;">Name</div>
<div class="a" style="left:1111px;top:713px;width:212px;height:27px;background:#e1e3e1"></div>
<svg style="left:1112px;top:712px;" width="30" height="30" viewBox="0 0 30 30"><path d="M10.8 9.2H10C8.6 9.2 8 10 8 11.2V13.2C8 14.3 7.3 15 5.9 15 7.3 15 8 15.7 8 16.8V18.8C8 20 8.6 20.8 10 20.8H10.8M15.2 9.2H16C17.4 9.2 18 10 18 11.2V13.2C18 14.3 18.7 15 20.1 15 18.7 15 18 15.7 18 16.8V18.8C18 20 17.4 20.8 16 20.8H15.2" fill="none" stroke="#e8590c" stroke-width="1.7"/><circle cx="13.1" cy="12.2" r="1.2" fill="#e8590c"/><path d="M13.5 15.4L12.5 19" stroke="#e8590c" stroke-width="1.8" stroke-linecap="round"/></svg>
<div class="a" style="left:1139px;top:717px;font-size:16.3px;line-height:20px;color:#1f1f1f;letter-spacing:-0.1px">daily?page=1&amp;pageSiz...</div>
<div class="a" style="left:1111px;top:740px;width:212px;height:191px;background:#fff"></div>
<div class="a" style="left:1323px;top:680px;width:1px;height:251px;background:#d3e3fd"></div>
<div class="a" style="left:1324px;top:680px;width:587px;height:33px;background:#eef2fa;border-bottom:1px solid #d3e3fd"></div>
<svg style="left:1342px;top:690px;" width="14" height="14" viewBox="0 0 14 14"><path d="M1.5 1.5L12.5 12.5M12.5 1.5L1.5 12.5" stroke="#474747" stroke-width="1.7"/></svg>
<div class="a" style="left:1382px;top:688px;font-size:15.5px;line-height:20px;color:#474747;">Headers</div>
<div class="a" style="left:1467px;top:688px;font-size:15.5px;line-height:20px;color:#0b57d0;">Payload</div>
<div class="a" style="left:1548px;top:688px;font-size:15.5px;line-height:20px;color:#474747;">Preview</div>
<div class="a" style="left:1629px;top:688px;font-size:15.5px;line-height:20px;color:#474747;">Response</div>
<div class="a" style="left:1723px;top:688px;font-size:15.5px;line-height:20px;color:#474747;">Initiator</div>
<div class="a" style="left:1804px;top:688px;font-size:15.5px;line-height:20px;color:#474747;">Timing</div>
<div class="a" style="left:1879px;top:688px;font-size:15.5px;line-height:20px;color:#474747;">Cookies</div>
<div class="a" style="left:1454px;top:710px;width:81px;height:3px;background:#0b57d0;border-radius:3px 3px 0 0"></div>
<div class="a" style="left:1324px;top:714px;width:587px;height:42px;background:#f1f1f1"></div>
<svg style="left:1337px;top:734px;" width="11" height="7" viewBox="0 0 11 7"><path d="M0.5 0.5H10.5L5.5 6.5Z" fill="#474747"/></svg>
<div class="a" style="left:1350px;top:726px;font-size:15.8px;line-height:20px;color:#333;font-weight:bold">Query String Parameters</div>
<div class="a" style="left:1574px;top:721px;width:118px;height:30px;border:1px solid #a8c7fa;border-radius:15px"></div>
<div class="a" style="left:1590px;top:726px;font-size:15.5px;line-height:20px;color:#0b57d0;">View source</div>
<div class="a" style="left:1729px;top:721px;width:169px;height:30px;border:1px solid #a8c7fa;border-radius:15px"></div>
<div class="a" style="left:1745px;top:726px;font-size:15.5px;line-height:20px;color:#0b57d0;">View URL-encoded</div>
<div class="a" style="left:1343px;top:762.0px;font-size:14.6px;line-height:20px;color:#474747;">page</div>
<div class="a" style="left:1545px;top:762.0px;font-size:15px;line-height:20px;color:#1f1f1f;">1</div>
<div class="a" style="left:1343px;top:789.6px;font-size:14.6px;line-height:20px;color:#474747;">pageSize</div>
<div class="a" style="left:1545px;top:789.6px;font-size:15px;line-height:20px;color:#1f1f1f;">10</div>
<div class="a" style="left:1343px;top:817.2px;font-size:14.6px;line-height:20px;color:#474747;">approvalStatus</div>
<div class="a" style="left:1545px;top:817.2px;font-size:15px;line-height:20px;color:#1f1f1f;"></div>
<div class="a" style="left:1343px;top:844.8px;font-size:14.6px;line-height:20px;color:#474747;">idType</div>
<div class="a" style="left:1545px;top:844.8px;font-size:15px;line-height:20px;color:#1f1f1f;">港澳身份证</div>
<div class="a" style="left:1324px;top:878px;width:587px;height:1px;background:#d3e3fd"></div>
</body></html>
